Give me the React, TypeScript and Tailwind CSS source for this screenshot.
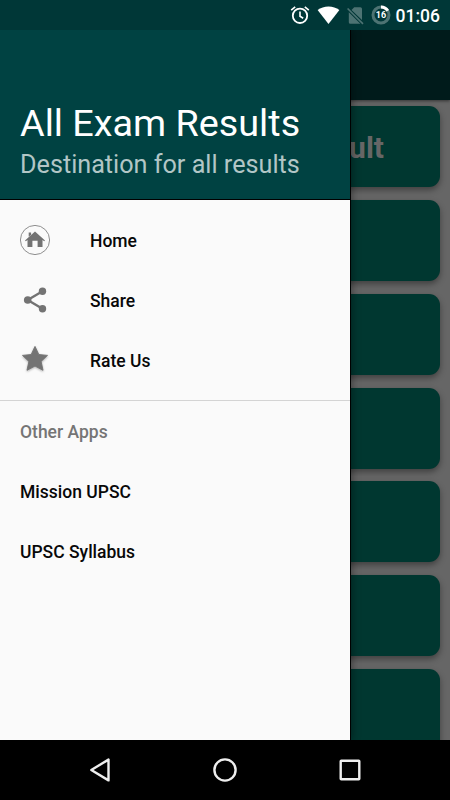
import type { ReactNode } from 'react';

const OTHER_APPS = ['Mission UPSC', 'UPSC Syllabus'];
const CARDS = ['Result', '', '', '', '', '', ''];

export default function App() {
  return (
    <div className="relative flex h-[800px] w-[450px] flex-col overflow-hidden bg-black font-[Roboto,sans-serif]">
      <StatusBar />
      <div className="relative min-h-0 flex-1 overflow-hidden bg-[#666666]">
        <ResultList />
        <Drawer />
      </div>
      <NavBar />
    </div>
  );
}

function StatusBar() {
  return (
    <header className="flex h-[30px] shrink-0 items-center justify-end bg-[#003737] pr-[10px] text-white">
      <svg className="mr-[7px] h-5 w-5" viewBox="0 0 20 20" fill="none" stroke="currentColor" strokeWidth="1.8">
        <circle cx="10" cy="10.8" r="7.2" />
        <path d="M10 6.5v4.8l3.2 2M1.2 5.2l4-3.4M18.8 5.2l-4-3.4" strokeWidth="1.6" />
      </svg>
      <svg className="mr-[6px] h-5 w-[23px]" viewBox="0 0 23 20" fill="currentColor">
        <path d="M11.5 19L.6 5.1C3.7 2.7 7.4 1.4 11.5 1.4s7.8 1.3 10.9 3.7z" />
      </svg>
      <svg className="mr-[7px] h-5 w-[18px]" viewBox="0 0 18 20">
        <path d="M8.2 2.2h6.2A1.6 1.6 0 0116 3.8v11.3L5.5 4.9zM2.8 7.2l11.6 11.6H4.4a1.6 1.6 0 01-1.6-1.6z" fill="#4d7373" />
        <path d="M1.6 3.5l15.4 15.4" stroke="#4d7373" strokeWidth="1.6" />
      </svg>
      <svg className="mr-[5px] h-5 w-5" viewBox="0 0 20 20">
        <circle cx="10" cy="10" r="8" fill="none" stroke="#4d7373" strokeWidth="3" />
        <path d="M10 2a8 8 0 016.8 3.8" fill="none" stroke="white" strokeWidth="3" />
        <text x="10" y="13.3" textAnchor="middle" fill="white" fontSize="9" fontWeight="700">16</text>
      </svg>
      <span className="pt-[2px] text-[17.5px] leading-[28px] font-medium">01:06</span>
    </header>
  );
}

function ResultList() {
  return (
    <main>
      <div className="h-[70px] bg-[#001b1b] shadow-[0_1px_3px_rgba(0,0,0,0.5)]" />
      <div className="flex flex-col gap-[12.75px] px-[10px] pt-[6.25px]">
        {CARDS.map((label, i) => (
          <div
            key={i}
            className="flex h-[81px] shrink-0 items-center justify-end rounded-[11px] bg-[#003730] pt-[2px] pr-[56px] text-[30px] font-bold text-[#666666] shadow-[0_3px_6px_rgba(0,0,0,0.38)]"
          >
            {label}
          </div>
        ))}
      </div>
    </main>
  );
}

function Drawer() {
  return (
    <aside className="absolute inset-y-0 left-0 w-[350px] bg-[#fafafa] shadow-[1px_0_0_#000,2px_0_8px_rgba(0,0,0,0.4)]">
      <div className="flex h-[170px] flex-col border-b border-black bg-[#004242] pt-[69px] pl-5">
        <h1 className="text-[37.75px] leading-[48px] whitespace-nowrap text-white">All Exam Results</h1>
        <p className="pt-[1px] text-[25.2px] leading-[34px] whitespace-nowrap text-[#b2c6c6]">
          Destination for all results
        </p>
      </div>

      <nav className="pt-[10px]">
        <MenuItem icon={<HomeIcon />} label="Home" />
        <MenuItem icon={<ShareIcon />} label="Share" />
        <MenuItem icon={<StarIcon />} label="Rate Us" />
      </nav>

      <div className="mt-[10px] border-t border-[#d4d4d4] pt-[1px]">
        <div className="flex h-[60px] items-center pl-5 text-[17.5px] font-medium text-[#757575]">Other Apps</div>
        {OTHER_APPS.map(app => (
          <div key={app} className="flex h-[60px] items-center pl-5 text-[17.5px] font-medium text-[#080808]">
            {app}
          </div>
        ))}
      </div>
    </aside>
  );
}

function MenuItem({ icon, label }: { icon: ReactNode; label: string }) {
  return (
    <div className="flex h-[60px] items-center gap-10 pl-5 text-[17.5px] font-medium text-[#080808]">
      {icon}
      <span className="pt-[2px]">{label}</span>
    </div>
  );
}

function HomeIcon() {
  return (
    <svg className="h-[30px] w-[30px]" viewBox="0 0 30 30" fill="#737373">
      <circle cx="15" cy="15" r="14.6" fill="none" stroke="#737373" strokeWidth="0.8" />
      <path d="M15 6.6L5 15.4l.8.9 1.7-1.3v7h4.9v-6.3h5.2V22h4.9v-7l1.7 1.3.8-.9zM8.7 7.5h2.4v2.2l-2.4 2.1z" />
    </svg>
  );
}

function ShareIcon() {
  return (
    <svg className="h-[30px] w-[30px]" viewBox="0 0 30 30" fill="#737373">
      <path d="M22.5 6.3L7.7 15l14.8 8.7" fill="none" stroke="#737373" strokeWidth="2.4" />
      <circle cx="22.5" cy="6.3" r="3.7" />
      <circle cx="7.7" cy="15" r="3.8" />
      <circle cx="22.5" cy="23.7" r="3.7" />
    </svg>
  );
}

function StarIcon() {
  return (
    <svg className="h-[30px] w-[30px] drop-shadow-[0_1px_1px_rgba(0,0,0,0.3)]" viewBox="0 0 30 30">
      <path
        d="M15 1.4l3.8 8.1 8.7.9-6.4 6 1.9 8.9-8-4.3-8 4.3 1.9-8.9-6.4-6 8.7-.9z"
        fill="#737373"
        stroke="#737373"
        strokeWidth="0.9"
        strokeLinejoin="round"
      />
    </svg>
  );
}

function NavBar() {
  return (
    <footer className="flex h-[60px] shrink-0 items-center justify-between bg-black px-[85px]">
      <svg className="h-[30px] w-[30px]" viewBox="0 0 30 30" fill="none" stroke="#eeeeee" strokeWidth="2.4">
        <path d="M23.5 4.6v20.8L6.3 15z" strokeLinejoin="round" />
      </svg>
      <svg className="h-[30px] w-[30px]" viewBox="0 0 30 30" fill="none" stroke="#eeeeee" strokeWidth="2.4">
        <circle cx="15" cy="15" r="10.6" />
      </svg>
      <svg className="h-[30px] w-[30px]" viewBox="0 0 30 30" fill="none" stroke="#eeeeee" strokeWidth="2.4">
        <rect x="5.7" y="5.7" width="18.6" height="18.6" rx="0.6" />
      </svg>
    </footer>
  );
}
